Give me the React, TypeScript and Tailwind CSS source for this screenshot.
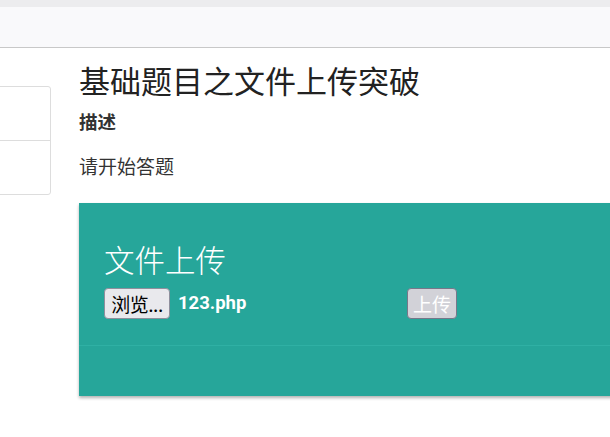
const cjk = "font-['Microsoft_YaHei','Noto_Sans_CJK_SC',sans-serif]";

function Sidebar() {
  return (
    <div className="w-[51px] shrink-0 overflow-hidden pt-[38px]">
      <div className="-ml-[20px] w-[71px] rounded-[3px] border border-[#dddddd] bg-white">
        <div className="h-[54px] border-b border-[#dddddd]" />
        <div className="h-[53px]" />
      </div>
    </div>
  );
}

export default function App() {
  return (
    <div className={`w-[610px] h-[437px] overflow-hidden bg-white text-[#333333] ${cjk}`}>
      <div className="h-[7px] bg-[#ececee]" />
      <div className="h-[41px] border-b border-[#c8c8c8] bg-[#f9f9fb]" />

      <div className="flex gap-[28px]">
        <Sidebar />

        <div className="shrink-0">
          <h1 className="mt-[12px] text-[31px] leading-[40px] text-[#222222]">
            基础题目之文件上传突破
          </h1>
          <h4 className="mt-[9px] text-[18.5px] font-bold leading-[24px]">描述</h4>
          <p className="mt-[20px] text-[19px] leading-[26px]">请开始答题</p>

          <div className="mt-[24px] w-[600px] bg-[#26a69a] shadow-[0_2px_3px_rgba(0,0,0,0.3)]">
            <div className="h-[143px] border-b border-[#2fb0a4] px-[25px] pt-[33px]">
              <div className="text-[30.5px] leading-[46px] font-light text-white">文件上传</div>
              <div className="mt-[6px] flex items-center">
                <button className="h-[31px] w-[66px] rounded-[4px] border border-[#8f8f9d] bg-[#e9e9ed] text-[19px] leading-[20px] tracking-[-0.5px] text-black">
                  浏览...
                </button>
                <span className="ml-[8px] w-[229px] font-['Roboto',sans-serif] text-[18.5px] font-bold text-white">
                  123.php
                </span>
                <button
                  disabled
                  className="h-[31px] w-[50px] rounded-[4px] border border-[#77778a] bg-[#d2d2d8] text-[19px] leading-[20px] text-white"
                >
                  上传
                </button>
              </div>
            </div>
            <div className="h-[50px]" />
          </div>
        </div>
      </div>
    </div>
  );
}
